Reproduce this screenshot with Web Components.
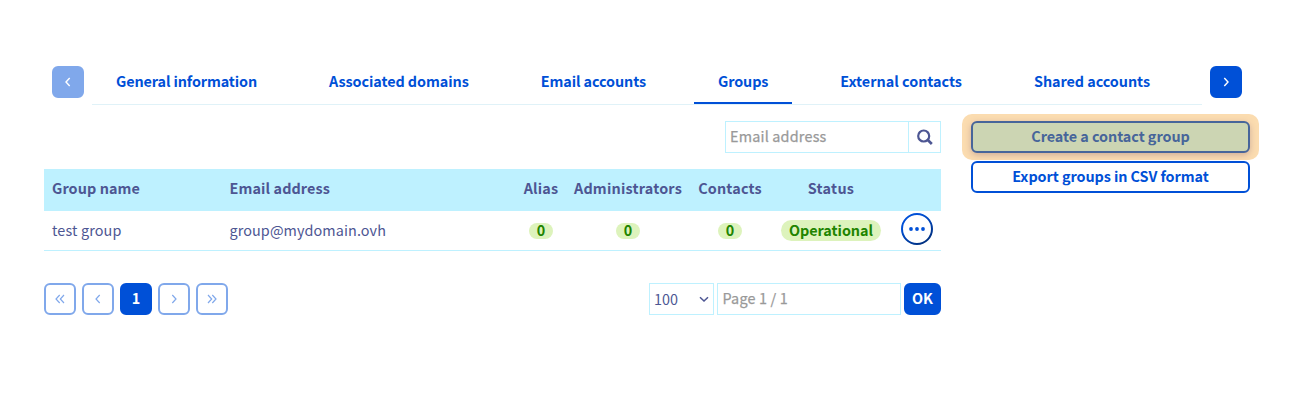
<!DOCTYPE html>
<html lang="en">
<head>
<meta charset="utf-8">
<title>Groups</title>
<style>
body{margin:0;background:#fff;font:14.4px/20px "Noto Sans CJK JP","Noto Sans",sans-serif;color:#4d5693}
</style>
</head>
<body>
<groups-page></groups-page>
<script>
const define = (name, html, setup) => {
  const t = document.createElement('template');
  t.innerHTML = html;
  customElements.define(name, class extends HTMLElement {
    connectedCallback() {
      if (this.shadowRoot) return;
      this.attachShadow({mode: 'open'}).append(t.content.cloneNode(true));
      if (setup) setup(this, this.shadowRoot);
    }
  });
};

// Single-line label whose tracking is adjusted to a given advance width.
define('ui-text', `<style>:host{display:inline-block;vertical-align:top;white-space:nowrap;line-height:18px;height:20px}span{display:inline-block}</style><span><slot></slot></span>`,
  (el, root) => {
    const s = root.querySelector('span'), w = +el.getAttribute('w');
    const n = el.textContent.length;
    if (w) {
      s.style.letterSpacing = (w - s.getBoundingClientRect().width) / n + 'px';
      el.style.width = w + 'px';
    }
  });

const paths = {
  left: 'M9.7 4 6 8l3.700 4', right: 'M6.300 4 10 8l-3.700 4',
  first: 'M7.700 4 4 8l3.700 4M12 4 8.300 8 12 12', last: 'M4 4 7.700 8 4 12M8.300 4 12 8l-3.700 4',
  down: 'M4 6.200 8 10l4-3.800'
};
define('ui-icon', `<style>:host{display:block;width:16px;height:16px}svg{display:block}path{fill:none;stroke:currentColor;stroke-width:var(--stroke,1.2)}</style><svg width="16" height="16" viewBox="0 0 16 16"><path/></svg>`,
  (el, root) => root.querySelector('path').setAttribute('d', paths[el.getAttribute('name')]));

define('ui-button', `<style>
:host{box-sizing:border-box;display:flex;align-items:center;justify-content:center;width:32px;height:32px;flex:none;border:2px solid #0050d7;border-radius:6px;color:#0050d7;background:#fff;font-weight:700}
:host([solid]){background:#0050d7;color:#fff}
:host([off]){border-color:#80a8eb;color:#80a8eb}
:host([off][solid]){background:#80a8eb;color:#fff}
</style><slot></slot>`);

define('tab-item', `<style>
:host{display:block;padding:0 24px;height:36px;margin-right:24px;color:#0050d7;font-weight:700;border-bottom:2px solid transparent}
:host([active]){border-color:#0050d7}
</style><slot></slot>`);

define('tab-bar', `<style>
:host{display:flex;width:1190px;margin-left:52px;height:39px}
nav{display:flex;box-sizing:border-box;margin:0 8px;width:1110px;height:39px;padding-top:0;border-bottom:1px solid #e0f2f8}
tab-item{padding-top:6px;height:30px}
ui-icon{--stroke:1.4}
</style>
<ui-button solid off><ui-icon name="left"></ui-icon></ui-button>
<nav>
<tab-item><ui-text w="141">General information</ui-text></tab-item>
<tab-item><ui-text w="139.700">Associated domains</ui-text></tab-item>
<tab-item><ui-text w="105.300">Email accounts</ui-text></tab-item>
<tab-item active><ui-text w="50.300">Groups</ui-text></tab-item>
<tab-item><ui-text w="121.700">External contacts</ui-text></tab-item>
<tab-item><ui-text w="116">Shared accounts</ui-text></tab-item>
</nav>
<ui-button solid><ui-icon name="right"></ui-icon></ui-button>`);

define('search-box', `<style>
:host{display:flex;box-sizing:border-box;width:216px;height:32px;border:1px solid #bef1ff;margin-left:auto}
div{flex:1;padding:5px 0 0 4px;color:#999;-webkit-text-stroke:.25px #999}
button{all:unset;box-sizing:border-box;width:32px;border-left:1px solid #bef1ff;display:flex;align-items:center;justify-content:center}
</style><div><ui-text w="96.500">Email address</ui-text></div>
<button aria-label="Search"><svg width="16" height="16" viewBox="0 0 16 16" fill="none" stroke="#4d5693"><circle cx="6.700" cy="7" r="5.500" stroke-width="2.200"/><path d="m10.800 11 4 4" stroke-width="2.600"/></svg></button>`);

define('status-pill', `<style>
:host{box-sizing:border-box;display:flex;align-items:center;justify-content:center;width:24px;height:16px;border-radius:11px;background:#ddf3bc;color:#218400;font-weight:700}
:host([wide]){width:100px;height:21px}
</style><slot></slot>`);

define('group-table', `<style>
:host{display:block;margin-top:16px}
.row{display:grid;grid-template-columns:177.500px 294.500px 50px 124px 80px 122px 49px;align-items:center;justify-items:center;height:39px;border-bottom:1px solid #bef1ff}
.head{height:42px;border:0;background:#bef1ff;font-weight:700}
.row>:nth-child(-n+2){justify-self:start;margin-left:8px}
.head>ui-text{position:relative;top:-1px}
.more{all:unset;width:32px;height:32px;margin-top:-3px}
svg{display:block}
</style>
<div class="row head"><ui-text w="88">Group name</ui-text><ui-text w="100.500">Email address</ui-text><ui-text w="34.500">Alias</ui-text><ui-text w="108">Administrators</ui-text><ui-text w="63.500">Contacts</ui-text><ui-text w="46.500">Status</ui-text></div>
<div class="row"><ui-text w="69.500">test group</ui-text><ui-text w="156.500">group@mydomain.ovh</ui-text>
<status-pill><ui-text w="8.500">0</ui-text></status-pill><status-pill><ui-text w="8.500">0</ui-text></status-pill><status-pill><ui-text w="8.500">0</ui-text></status-pill><status-pill wide><ui-text w="84">Operational</ui-text></status-pill>
<button class="more" aria-label="Actions"><svg width="32" height="32" viewBox="0 0 32 32"><defs><linearGradient id="g" x1="0" y1="0" x2=".7" y2="1"><stop offset=".3" stop-color="#0050d7"/><stop offset="1" stop-color="#003080"/></linearGradient></defs><circle cx="16" cy="16" r="15" fill="#fff" stroke="url(#g)" stroke-width="2"/><g fill="#0050d7"><circle cx="10" cy="16" r="1.900"/><circle cx="16" cy="16" r="1.900"/><circle cx="22" cy="16" r="1.900"/></g></svg></button></div>`);

define('page-controls', `<style>
:host{display:flex;margin-top:32px;height:32px}
.pages{display:flex;gap:6px;margin-right:auto}
.field{box-sizing:border-box;height:32px;border:1px solid #bef1ff;display:flex;align-items:center;padding:0 4px}
.size{width:65px;justify-content:space-between;padding-right:1px;margin-right:3px}
.size ui-text{position:relative;top:1px}
.page{width:184px;padding-left:4.500px;color:#999;-webkit-text-stroke:.25px #999;margin-right:3px}
.size ui-icon{--stroke:1.5}
.ok{width:37px}
</style>
<div class="pages"><ui-button off><ui-icon name="first"></ui-icon></ui-button><ui-button off><ui-icon name="left"></ui-icon></ui-button><ui-button solid><ui-text w="8.500">1</ui-text></ui-button><ui-button off><ui-icon name="right"></ui-icon></ui-button><ui-button off><ui-icon name="last"></ui-icon></ui-button></div>
<div class="field size"><ui-text w="24">100</ui-text><ui-icon name="down"></ui-icon></div>
<div class="field page"><ui-text w="65.500">Page 1 / 1</ui-text></div>
<ui-button class="ok" solid><ui-text w="21">OK</ui-text></ui-button>`);

define('side-actions', `<style>
:host{display:flex;flex-direction:column;gap:8px;width:279px}
ui-button{width:279px}
.spot{position:relative;z-index:0}
.spot::before{content:"";position:absolute;z-index:-1;inset:-7px -9px;border-radius:10px;background:#fbdcb0}
.spot ui-button{background:#ccd5b3;border-color:#47659a;color:#47659a;box-shadow:0 2px 6px rgba(125,90,115,.35)}
</style>
<div class="spot"><ui-button><ui-text w="158.500">Create a contact group</ui-text></ui-button></div>
<ui-button><ui-text w="196.500">Export groups in CSV format</ui-text></ui-button>`);

define('groups-page', `<style>
:host{display:block;box-sizing:border-box;width:1300px;height:400px;padding-top:66px}
main{display:grid;grid-template-columns:897px 279px;column-gap:30px;margin:16px 0 0 44px}
</style><tab-bar></tab-bar><main><section><search-box></search-box><group-table></group-table><page-controls></page-controls></section><side-actions></side-actions></main>`);
</script>
</body>
</html>
